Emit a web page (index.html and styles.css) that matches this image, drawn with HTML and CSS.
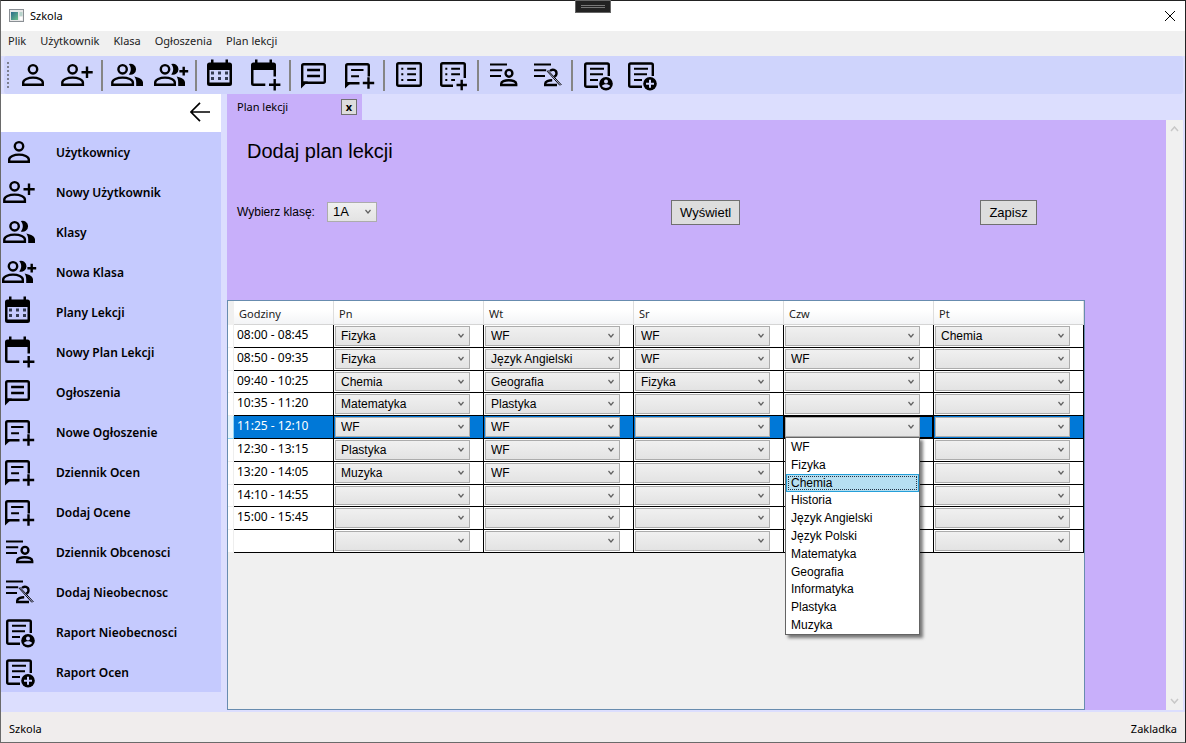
FILE: index.html
```
<!DOCTYPE html>
<html lang="pl">
<head>
<meta charset="utf-8">
<title>Szkola</title>
<link rel="stylesheet" href="styles.css">
</head>
<body>
<svg class="sprite" aria-hidden="true">
  <symbol id="user" viewBox="-18 -18 36 36"><g class="ln"><circle cx="0" cy="-5.7" r="4.2"/><path d="M-9.8 9.8V7.6c0-3 5-5 9.8-5s9.8 2 9.8 5v2.2z"/></g></symbol>
  <symbol id="user-plus" viewBox="-18 -18 36 36"><g class="ln"><circle cx="-4.4" cy="-5.7" r="4.2"/><path d="M-14.7 9.8V7.6c0-3 5-5 10.3-5s10.3 2 10.3 5v2.2z"/><path d="M10 -8.5v11.5M4.5 -2.7h11.2"/></g></symbol>
  <symbol id="group" viewBox="-18 -18 36 36"><g class="ln"><circle cx="-4.4" cy="-5.7" r="4.2"/><path d="M-14.7 9.8V7.6c0-3 5-5 10.3-5s10.3 2 10.3 5v2.2z"/></g><path d="M1.8 -10.9a5.5 5.5 0 1 1 0 10.4c2.7-3 2.7-7.4 0-10.4zM7.3 1.4c5 .9 8.7 3 8.7 6.2V11H9.2V7.4c0-2.400-.7-4.400-1.900-6z"/></symbol>
  <symbol id="group-plus" viewBox="-18 -18 36 36"><g class="ln"><circle cx="-6" cy="-5.700" r="4.200"/><path d="M-15.800 9.800V7.600c0-3 4.800-5 9.800-5s9.800 2 9.800 5v2.200z"/><path d="M12.700 -8.200v8.800M8.400 -3.800h8.800"/></g><path d="M.2 -10.900a5.500 5.500 0 1 1 0 10.400c2.700-3 2.700-7.400 0-10.400zM5.600 1.400c5 .9 8.400 3 8.400 6.200V11H7.200V7.400c0-2.400-.5-4.400-1.600-6z"/></symbol>
  <symbol id="calendar" viewBox="-18 -18 36 36"><path d="M-10-15.500h2.500v3H4.500v-3H7v3h1.500a2.500 2.500 0 0 1 2.500 2.500V8.500A2.500 2.500 0 0 1 8.500 11h-20A2.500 2.500 0 0 1-14 8.500V-10a2.500 2.500 0 0 1 2.500-2.500h1.500zM-11.500-5V7.500h20V-5z" fill-rule="evenodd"/><path class="soft" d="M-10-3.500h3v3h-3zM-3-3.500h3v3h-3zM4-3.500h3v3H4zM-10 2h3v3h-3zM-3 2h3v3h-3zM4 2h3v3H4z"/></symbol>
  <symbol id="calendar-plus" viewBox="-18 -18 36 36"><path d="M-10-15.500h2.500v3H4.500v-3H7v3h1.500a2.500 2.500 0 0 1 2.500 2.500V1.500H8.500V-5h-20V8.400H.3v2.500h-11.800A2.500 2.500 0 0 1-14 8.400V-10a2.500 2.500 0 0 1 2.500-2.500h1.500z"/><path class="ln" d="M9.700 4v11.400M4 9.700h11.400"/></symbol>
  <symbol id="chat" viewBox="-18 -18 36 36"><path class="ln" d="M-12.800 9V-9.300q0-1.500 1.500-1.500H8.300q1.500 0 1.500 1.500V6.200q0 1.500-1.500 1.500h-20M-7.900-5H5M-7.900 1H5"/><path d="M-14 6.500h7L-14 13.500z"/></symbol>
  <symbol id="chat-plus" viewBox="-18 -18 36 36"><path class="ln" d="M-12.800 9V-9.300q0-1.500 1.500-1.500H8.300q1.500 0 1.500 1.500V1.500M.5 8.200h-12M9.500 2.300v11.400M3.800 8h11.400"/><path class="thin" d="M-7.900-5H4.500M-7.900 1.300H0"/><path d="M-14 7h7L-14 13.500z"/></symbol>
  <symbol id="list" viewBox="-18 -18 36 36"><rect class="ln" x="-11.800" y="-11.800" width="23.600" height="22.600" rx="1.500"/><path class="thin" d="M-7.700-6.200h2M-7.700-.7h2M-7.700 5h2M-1.800-6.200H7M-1.800-.7H7M-1.800 5H7"/></symbol>
  <symbol id="list-plus" viewBox="-18 -18 36 36"><path class="ln" d="M0 10.800h-10.300q-1.500 0-1.500-1.500v-19.600q0-1.500 1.500-1.500h20.600q1.500 0 1.500 1.500V3M8.700 4.800v10.400M3.500 10h10.400"/><path class="thin" d="M-7.700-6.200h2M-7.700-.7h2M-7.700 5h2M-1.800-6.200H7M-1.800-.7H7M-1.800 5H2"/></symbol>
  <symbol id="attend" viewBox="-18 -18 36 36"><path class="thin" d="M-13-10.500H4M-13-4.700H-.8M-13 1H-2"/><g class="ln"><circle cx="6" cy="-1.700" r="3.400"/><path d="M-1.800 10V8.800c0-2.200 3.600-3.600 7.500-3.600s7.500 1.400 7.500 3.600V10z"/></g></symbol>
  <symbol id="absent" viewBox="-18 -18 36 36"><path class="thin" d="M-13-10.500H4M-13-4.700H-.8M-13 1H-2"/><path class="ln" d="M3-4c2.200-2.400 6.400-1.200 6.500 2.200 0 1.800-.9 2.800-2.200 3.400M10 10H-1.800V8.800c0-2.200 3.600-3.600 7-3.600"/><path class="hair" d="M.8-4.800L14.500 10M0-3.900L13 10.500"/></symbol>
  <symbol id="report-user" viewBox="-18 -18 36 36"><path class="ln" d="M1 11.800h-11.300q-1.500 0-1.500-1.500v-20.300q0-1.500 1.500-1.500H10.300q1.500 0 1.500 1.500V1"/><path class="thin" d="M-7-6.300H7M-7-.7H6M-7 5H1"/><circle cx="9" cy="8.700" r="6.800"/><g class="cut"><circle cx="9" cy="6.400" r="2"/><path d="M4.800 11c1.700-2.200 6.700-2.200 8.400 0-2 2.500-6.400 2.500-8.400 0z"/></g></symbol>
  <symbol id="report-plus" viewBox="-18 -18 36 36"><path class="ln" d="M1 11.800h-11.300q-1.500 0-1.500-1.500v-20.300q0-1.500 1.500-1.500H10.300q1.500 0 1.500 1.500V1"/><path class="thin" d="M-7-6.300H7M-7-.7H6M-7 5H1"/><circle cx="9" cy="8.700" r="6.800"/><path class="cut" d="M8 4.700h2v3h3v2h-3v3H8v-3H5v-2h3z"/></symbol>
  <symbol id="chev" viewBox="0 0 8 6"><path d="M1.500 1L4 4l2.500-3" fill="none" stroke="#606060" stroke-width="1.200"/></symbol>
</svg>

<div class="window">
  <div class="debug-handle"><i></i><i></i></div>
  <header class="titlebar">
    <svg class="app-icon" viewBox="0 0 16 14"><defs><linearGradient id="ag" x1="0" y1="0" x2="1" y2="1"><stop offset="0" stop-color="#2a6a8a"/><stop offset="1" stop-color="#6fc08a"/></linearGradient></defs><rect x=".5" y=".5" width="14" height="12" fill="#e8e8e8" stroke="#8a8f94"/><rect x="2" y="3" width="7" height="8" fill="url(#ag)"/><path d="M10.500 3h3v4h-3z" fill="#b8d4cc"/><path d="M10.500 8h3v3h-3z" fill="#fff"/></svg>
    <span class="title">Szkola</span>
    <button class="close" aria-label="Zamknij"><svg viewBox="0 0 12 12"><path d="M1 1l10 10M11 1L1 11" stroke="#000" stroke-width="1"/></svg></button>
  </header>
  <nav class="menu"><button>Plik</button><button>Użytkownik</button><button>Klasa</button><button>Ogłoszenia</button><button>Plan lekcji</button></nav>
  <div class="toolbar" id="toolbar"><span class="grip"></span></div>

  <div class="workspace">
    <aside class="sidebar">
      <div class="side-head"><button aria-label="Zwiń menu"><svg viewBox="0 0 20 20"><path d="M20 10H1M10 .8L.9 10l9.100 9.200" fill="none" stroke="#000" stroke-width="1.700"/></svg></button></div>
      <nav class="side-nav" id="sidenav"></nav>
    </aside>
    <main class="document">
      <div class="tab"><span>Plan lekcji</span><button aria-label="Zamknij zakładkę">x</button></div>
      <div class="scroller">
        <section class="page">
          <h1>Dodaj plan lekcji</h1>
          <div class="form-row">
            <div class="field"><label for="klasa">Wybierz klasę:</label><span class="combo class-combo"><select id="klasa"><option>1A</option></select><svg><use href="#chev"/></svg></span></div>
            <div><button class="btn">Wyświetl</button></div>
            <div><button class="btn">Zapisz</button></div>
          </div>
          <div class="datagrid">
            <table>
              <colgroup><col class="c-mark"><col class="c-time"><col><col><col><col><col></colgroup>
              <thead><tr><td class="mark"></td><th>Godziny</th><th>Pn</th><th>Wt</th><th>Sr</th><th>Czw</th><th>Pt</th></tr></thead>
              <tbody id="rows"></tbody>
            </table>
          </div>
        </section>
        <div class="scrollbar"><svg viewBox="0 0 9 6"><path d="M1 5l3.500-4L8 5"/></svg><svg viewBox="0 0 9 6"><path d="M1 1l3.500 4L8 1"/></svg></div>
      </div>
    </main>
  </div>
  <footer class="status"><span>Szkola</span><span>Zakladka</span></footer>
</div>
<script src="app.js"></script>
</body>
</html>
```
FILE: styles.css
```
* { box-sizing: border-box; }
:root {
  --ui: "Segoe UI", "Noto Sans", "Open Sans", sans-serif;
  --doc: Arial, "Liberation Sans", sans-serif;
  --lilac: #c8affa;
  --surface: #c5cafe;
}
body { margin: 0; font: 11px/16px var(--ui); color: #000; }
button, select { font: inherit; color: inherit; margin: 0; }
button { background: none; border: 0; padding: 0; }
.sprite { position: absolute; width: 0; height: 0; }
.ln { fill: none; stroke: #000; stroke-width: 2.4; }
.thin { fill: none; stroke: #000; stroke-width: 2; }
.hair { fill: none; stroke: #000; stroke-width: 1; }
.soft { fill: #333a50; }
.cut { fill: var(--surface); }

.window {
  position: relative;
  display: flex;
  flex-direction: column;
  min-height: 100vh;
  border: 1px solid #222;
  border-left-color: #6a6a6a;
  border-bottom-color: #6a6a6a;
  background: #dcdefe;
}
.debug-handle {
  position: absolute; top: -1px; left: 50%;
  display: flex; flex-direction: column; align-items: center; justify-content: center; gap: 1px;
  width: 36px; height: 13px; margin-left: -18px;
  background: #222; border: 1px solid #666;
}
.debug-handle i { width: 24px; height: 1px; background: #777; }
.titlebar { display: flex; align-items: center; height: 30px; padding: 0 8px; background: #fff; }
.app-icon { width: 16px; height: 14px; }
.title { flex: 1; padding-left: 5px; }
.close { width: 14px; height: 14px; }
.close svg { display: block; width: 12px; height: 12px; margin: auto; }
.menu { display: flex; align-items: flex-start; gap: 14px; height: 25px; padding: 2px 7px; background: #f0f0f0; color: #222; }
.toolbar {
  --surface: #cfd4fc;
  display: flex; align-items: center;
  height: 38px; margin: 0 2px 0 3px; padding-left: 3px;
  background: var(--surface); border-radius: 3px;
}
.grip { width: 2px; height: 27px; margin-right: 2px; background: repeating-linear-gradient(#7d8090 0 2px, transparent 2px 4px); }
.tool { display: grid; place-items: center; width: 44px; height: 36px; }
.icon { display: block; width: 36px; height: 36px; }
.sep { width: 2px; height: 31px; margin: 0 2px; background: #858585; }

.workspace { display: flex; flex: 1; }
.sidebar { width: 220px; padding-bottom: 20px; }
.side-head { display: flex; justify-content: flex-end; align-items: center; height: 38px; padding: 0 11px 2px 0; background: #fff; }
.side-head svg { display: block; width: 20px; height: 20px; }
.side-nav { background: var(--surface); font-size: 12px; font-weight: 600; }
.side-nav a { display: flex; align-items: center; gap: 19px; height: 40px; color: #000; text-decoration: none; }
.side-nav span { padding-top: 2px; }

.document { display: flex; flex-direction: column; flex: 1; margin: 0 2px 2px 6px; }
.tab { display: flex; align-items: center; justify-content: space-between; width: 135px; height: 26px; padding: 0 5px 0 10px; background: var(--lilac); }
.tab button { width: 16px; height: 16px; border: 1px solid #707070; background: #ddd; font-weight: 700; line-height: 12px; }
.scroller { display: flex; flex: 1; }
.page { display: flex; flex-direction: column; flex: 1; background: var(--lilac); font: 12px/16px var(--doc); }
h1 { margin: 19px 20px 36px; font-size: 20px; line-height: 25px; font-weight: 400; }
.form-row { display: grid; grid-template-columns: 7fr 5fr 3fr; align-items: start; padding-left: 11px; margin-bottom: 75px; }
.field { display: flex; align-items: center; gap: 12px; margin-left: -1px; padding-top: 2px; }
.btn { display: block; height: 25px; padding: 0 8px; border: 1px solid #707070; background: #ddd; font-size: 13px; }
.combo { position: relative; display: block; width: 135px; }
.combo select {
  appearance: none; display: block; width: 100%; height: 20px;
  padding: 0 20px 0 5px; border: 1px solid #acacac; border-radius: 0; outline: 0;
  background: linear-gradient(#f0f0f0, #e3e3e3); font-size: 12px;
}
.combo > svg { position: absolute; right: 5px; top: 7px; width: 8px; height: 6px; pointer-events: none; }
.class-combo { width: 50px; }
.class-combo select { font-size: 13px; }

.datagrid { flex: 1; width: 858px; background: #f0f0f0; border: 1px solid #688caf; }
table { width: 100%; table-layout: fixed; border-collapse: separate; border-spacing: 0; background: #fff; }
.c-mark { width: 6px; }
.c-time { width: 100px; }
th, td { padding: 0; }
th { height: 24px; padding: 2px 0 0 5px; text-align: left; font: 11px/16px var(--ui); color: #222; border-right: 1px solid #dedede; border-bottom: 1px solid #d5d5d5; background: linear-gradient(#fff 40%, #f3f4f6); }
tbody td { height: 23px; padding: 1px 0 1px 1px; border-right: 1px solid #000; border-bottom: 1px solid #000; }
tbody tr:nth-child(5n+3) td { height: 22px; }
tbody tr:nth-child(5n+3) select { height: 19px; }
tbody .time { padding: 2px 0 0 3px; font: 12px/16px var(--ui); vertical-align: top; }
tbody .mark { border-color: #eee; padding: 0; }
thead .mark { background: #f0f0f0; }
.selected td { background: #0078d7; color: #fff; }
.selected select { color: #000; }
.selected .mark { background: #e6f5fd; border-color: #8fd4f5; }
.selected .open { box-shadow: inset 0 0 0 1px #000; }

.options {
  position: absolute; top: 100%; left: 0; z-index: 2;
  width: 135px; margin: 0; padding: 0; list-style: none;
  border: 1px solid #646464; background: #fff; color: #000;
  box-shadow: 3px 3px 3px rgba(0, 0, 0, .5);
}
.options li { height: 18px; padding: 0 5px; line-height: 18px; }
.options li:nth-child(5n+4) { height: 17px; line-height: 17px; }
.options .current { padding: 0 4px; border: 1px solid #26a0da; background: #b6dff1; line-height: 16px; outline: 1px dotted #234; outline-offset: -3px; }

.scrollbar { display: flex; flex-direction: column; justify-content: space-between; align-items: center; width: 17px; padding: 6px 0; background: #f0f0f0; }
.scrollbar svg { width: 9px; height: 6px; fill: none; stroke: #c8c8c8; stroke-width: 1.5; }
.status { display: flex; justify-content: space-between; align-items: center; height: 30px; padding: 3px 8px 0; background: #f0eded; }
```
FILE: app.js
```
const icon = (id) => `<svg class="icon" aria-hidden="true"><use href="#${id}"/></svg>`;

const tools = [
  ['user', 'user-plus'], ['group', 'group-plus'], ['calendar', 'calendar-plus'],
  ['chat', 'chat-plus'], ['list', 'list-plus'], ['attend', 'absent'], ['report-user', 'report-plus'],
];
document.getElementById('toolbar').insertAdjacentHTML('beforeend', tools
  .map((group) => group.map((id) => `<button class="tool" aria-label="${id}">${icon(id)}</button>`).join(''))
  .join('<span class="sep"></span>'));

const links = [
  ['user', 'Użytkownicy'], ['user-plus', 'Nowy Użytkownik'], ['group', 'Klasy'],
  ['group-plus', 'Nowa Klasa'], ['calendar', 'Plany Lekcji'], ['calendar-plus', 'Nowy Plan Lekcji'],
  ['chat', 'Ogłoszenia'], ['chat-plus', 'Nowe Ogłoszenie'], ['chat-plus', 'Dziennik Ocen'],
  ['chat-plus', 'Dodaj Ocene'], ['attend', 'Dziennik Obcenosci'], ['absent', 'Dodaj Nieobecnosc'],
  ['report-user', 'Raport Nieobecnosci'], ['report-plus', 'Raport Ocen'],
];
document.getElementById('sidenav').innerHTML = links
  .map(([id, text]) => `<a href="#">${icon(id)}<span>${text}</span></a>`).join('');

const days = ['Pn', 'Wt', 'Sr', 'Czw', 'Pt'];
const subjects = ['WF', 'Fizyka', 'Chemia', 'Historia', 'Język Angielski', 'Język Polski',
  'Matematyka', 'Geografia', 'Informatyka', 'Plastyka', 'Muzyka'];
const plan = [
  ['08:00 - 08:45', 'Fizyka', 'WF', 'WF', '', 'Chemia'],
  ['08:50 - 09:35', 'Fizyka', 'Język Angielski', 'WF', 'WF', ''],
  ['09:40 - 10:25', 'Chemia', 'Geografia', 'Fizyka', '', ''],
  ['10:35 - 11:20', 'Matematyka', 'Plastyka', '', '', ''],
  ['11:25 - 12:10', 'WF', 'WF', '', '', ''],
  ['12:30 - 13:15', 'Plastyka', 'WF', '', '', ''],
  ['13:20 - 14:05', 'Muzyka', 'WF', '', '', ''],
  ['14:10 - 14:55', '', '', '', '', ''],
  ['15:00 - 15:45', '', '', '', '', ''],
  ['', '', '', '', '', ''],
];
const selectedRow = 4;
const openDay = 3;

const optionList = `<ul class="options" role="listbox">${subjects
  .map((s) => `<li role="option"${s === 'Chemia' ? ' class="current" aria-selected="true"' : ''}>${s}</li>`).join('')}</ul>`;

document.getElementById('rows').innerHTML = plan.map(([time, ...lessons], r) => {
  const cells = lessons.map((value, d) => {
    const open = r === selectedRow && d === openDay;
    const options = ['', ...subjects]
      .map((s) => `<option${s === value ? ' selected' : ''}>${s}</option>`).join('');
    return `<td${open ? ' class="open"' : ''}><div class="combo"><select aria-label="${days[d]} ${time}">${options}</select><svg><use href="#chev"/></svg>${open ? optionList : ''}</div></td>`;
  }).join('');
  return `<tr${r === selectedRow ? ' class="selected"' : ''}><td class="mark"></td><td class="time">${time}</td>${cells}</tr>`;
}).join('');
```
